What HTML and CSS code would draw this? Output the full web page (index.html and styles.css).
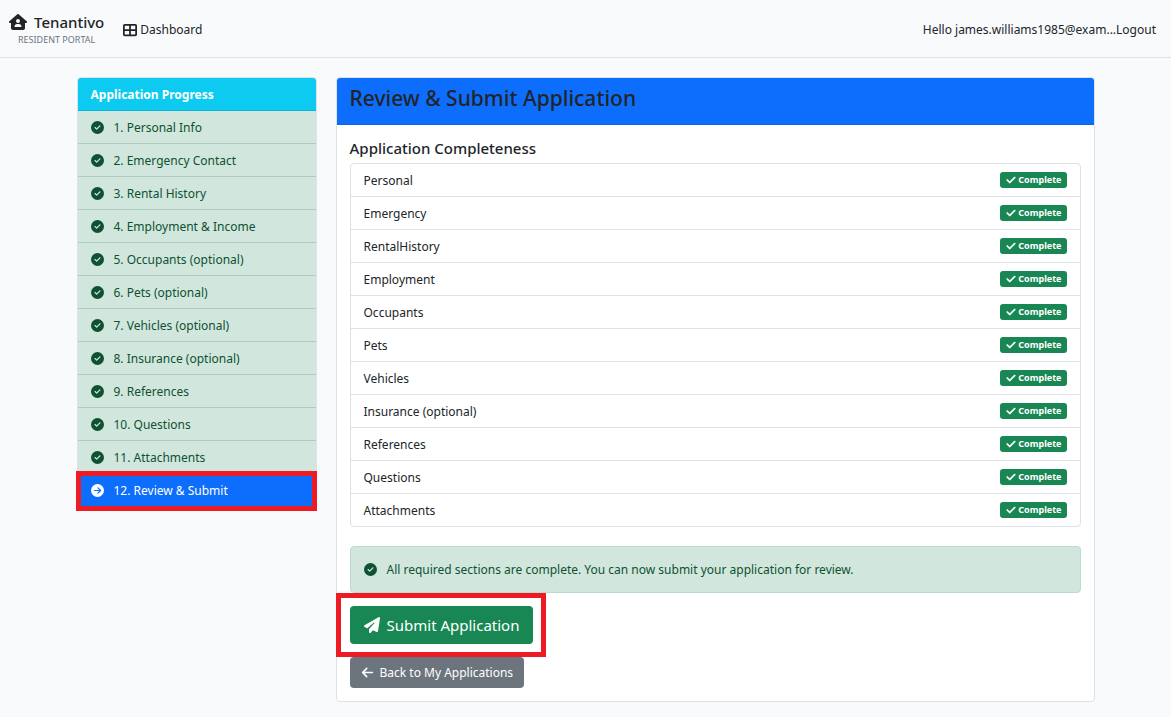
FILE: index.html
```html
<!DOCTYPE html>
<html lang="en">

<head>
    <meta charset="UTF-8">
    <meta name="viewport" content="width=device-width, initial-scale=1.0">
    <title>Review &amp; Submit Application - Tenantivo</title>
    <link rel="stylesheet" href="styles.css">
</head>

<body>
    <!-- Shared icons -->
    <svg class="icon-defs" aria-hidden="true">
        <symbol id="circle-check" viewBox="0 0 512 512">
            <path d="M256 512A256 256 0 1 0 256 0a256 256 0 1 0 0 512zM369 209L241 337c-9.4 9.4-24.6 9.4-33.9 0l-64-64c-9.4-9.4-9.4-24.6 0-33.9s24.6-9.4 33.9 0l47 47L335 175c9.4-9.4 24.6-9.4 33.9 0s9.4 24.6 0 33.9z"/>
        </symbol>
        <symbol id="check" viewBox="0 0 448 512">
            <path d="M438.6 105.4c12.5 12.5 12.5 32.8 0 45.3l-256 256c-12.5 12.5-32.8 12.5-45.3 0l-128-128c-12.5-12.5-12.5-32.8 0-45.3s32.8-12.5 45.3 0L160 338.7 393.4 105.4c12.5-12.5 32.8-12.5 45.3 0z"/>
        </symbol>
    </svg>

    <header class="navbar">
        <a href="#" class="brand">
            <span class="brand-name">
                <svg class="icon-brand" viewBox="0 0 576 512"><path d="M575.8 255.5c0 18-15 32.1-32 32.1l-32 0 .7 160.2c.2 35.5-28.5 64.3-64 64.3l-320.4 0c-35.3 0-64-28.7-64-64l0-160.4-32 0c-18 0-32-14-32-32.1c0-9 3-17 10-24L266.4 8c7-7 15-8 22-8s15 2 21 7L564.8 231.5c8 7 12 15 11 24zM352 224a64 64 0 1 0 -128 0 64 64 0 1 0 128 0zm-96 96c-44.2 0-80 35.8-80 80c0 8.8 7.2 16 16 16l192 0c8.8 0 16-7.2 16-16c0-44.2-35.8-80-80-80l-64 0z"/></svg>
                Tenantivo
            </span>
            <span class="brand-sub">RESIDENT PORTAL</span>
        </a>
        <a href="#" class="nav-link">
            <svg class="icon-grid" viewBox="0 0 512 512"><path d="M448 96V224H288V96H448zm0 192V416H288V288H448zM224 224H64V96H224V224zM64 288H224V416H64V288zM64 32C28.7 32 0 60.7 0 96V416c0 35.3 28.7 64 64 64H448c35.3 0 64-28.7 64-64V96c0-35.3-28.7-64-64-64H64z" fill-rule="evenodd"/></svg>
            Dashboard
        </a>
        <div class="nav-user">
            <a href="#" class="user-name">Hello james.williams1985@exam...</a>
            <a href="#">Logout</a>
        </div>
    </header>

    <div class="container">
        <nav class="card progress-card">
            <div class="progress-header">Application Progress</div>
            <a href="#" class="step"><svg class="icon"><use href="#circle-check"/></svg>1. Personal Info</a>
            <a href="#" class="step"><svg class="icon"><use href="#circle-check"/></svg>2. Emergency Contact</a>
            <a href="#" class="step"><svg class="icon"><use href="#circle-check"/></svg>3. Rental History</a>
            <a href="#" class="step"><svg class="icon"><use href="#circle-check"/></svg>4. Employment &amp; Income</a>
            <a href="#" class="step"><svg class="icon"><use href="#circle-check"/></svg>5. Occupants (optional)</a>
            <a href="#" class="step"><svg class="icon"><use href="#circle-check"/></svg>6. Pets (optional)</a>
            <a href="#" class="step"><svg class="icon"><use href="#circle-check"/></svg>7. Vehicles (optional)</a>
            <a href="#" class="step"><svg class="icon"><use href="#circle-check"/></svg>8. Insurance (optional)</a>
            <a href="#" class="step"><svg class="icon"><use href="#circle-check"/></svg>9. References</a>
            <a href="#" class="step"><svg class="icon"><use href="#circle-check"/></svg>10. Questions</a>
            <a href="#" class="step"><svg class="icon"><use href="#circle-check"/></svg>11. Attachments</a>
            <a href="#" class="step active">
                <svg class="icon" viewBox="0 0 512 512"><circle cx="256" cy="256" r="256"/><path class="arrow" d="M136 256H370M276 154L378 256L276 358"/></svg>12. Review &amp; Submit
            </a>
        </nav>

        <main class="card">
            <div class="card-header">
                <h1>Review &amp; Submit Application</h1>
            </div>
            <div class="card-body">
                <h2>Application Completeness</h2>
                <ul class="section-list">
                    <li>Personal <span class="badge"><svg class="icon-check"><use href="#check"/></svg>Complete</span></li>
                    <li>Emergency <span class="badge"><svg class="icon-check"><use href="#check"/></svg>Complete</span></li>
                    <li>RentalHistory <span class="badge"><svg class="icon-check"><use href="#check"/></svg>Complete</span></li>
                    <li>Employment <span class="badge"><svg class="icon-check"><use href="#check"/></svg>Complete</span></li>
                    <li>Occupants <span class="badge"><svg class="icon-check"><use href="#check"/></svg>Complete</span></li>
                    <li>Pets <span class="badge"><svg class="icon-check"><use href="#check"/></svg>Complete</span></li>
                    <li>Vehicles <span class="badge"><svg class="icon-check"><use href="#check"/></svg>Complete</span></li>
                    <li>Insurance (optional) <span class="badge"><svg class="icon-check"><use href="#check"/></svg>Complete</span></li>
                    <li>References <span class="badge"><svg class="icon-check"><use href="#check"/></svg>Complete</span></li>
                    <li>Questions <span class="badge"><svg class="icon-check"><use href="#check"/></svg>Complete</span></li>
                    <li>Attachments <span class="badge"><svg class="icon-check"><use href="#check"/></svg>Complete</span></li>
                </ul>

                <div class="alert">
                    <svg class="icon"><use href="#circle-check"/></svg>
                    All required sections are complete. You can now submit your application for review.
                </div>

                <form class="submit-form">
                    <button type="submit" class="btn btn-submit">
                        <svg class="icon-plane" viewBox="0 0 512 512"><path d="M498.1 5.6c10.1 7 15.4 19.1 13.5 31.2l-64 416c-1.5 9.7-7.4 18.2-16 23s-18.9 5.4-28 1.6L284 427.7l-68.5 74.1c-8.9 9.7-22.9 12.9-35.2 8.1S160 493.2 160 480l0-83.6c0-4 1.5-7.8 4.2-10.7L331.8 202.8c5.8-6.3 5.6-16-.4-22s-15.7-6.4-22-.7L106 360.8 17.7 316.6C7.1 311.3 .3 300.7 0 288.9s5.9-22.8 16.1-28.7l448-256c10.7-6.1 23.9-5.5 34 1.4z"/></svg>
                        Submit Application
                    </button>
                </form>
                <a href="#" class="btn btn-back">
                    <svg class="icon" viewBox="0 0 448 512"><path d="M9.4 233.4c-12.5 12.5-12.5 32.8 0 45.3l160 160c12.5 12.5 32.8 12.5 45.3 0s12.5-32.8 0-45.3L109.2 288 416 288c17.7 0 32-14.3 32-32s-14.3-32-32-32l-306.7 0L214.6 118.6c12.5-12.5 12.5-32.8 0-45.3s-32.8-12.5-45.3 0l-160 160z"/></svg>
                    Back to My Applications
                </a>
            </div>
        </main>
    </div>
</body>

</html>
```
FILE: styles.css
```css
* {
    box-sizing: border-box;
}

body {
    margin: 0;
    font-family: "Noto Sans", "Open Sans", sans-serif;
    font-size: 12px;
    line-height: 20px;
    color: #212529;
    background-color: #f9fafc;
}

a {
    color: inherit;
    text-decoration: none;
}

svg {
    fill: currentColor;
    flex-shrink: 0;
}

.icon-defs {
    display: none;
}

.icon {
    width: 13px;
    height: 13px;
}

/* Top bar */
.navbar {
    display: flex;
    align-items: center;
    height: 58px;
    padding: 2px 15px 0 9px;
    border-bottom: 1px solid #dee2e6;
}

.brand {
    display: flex;
    flex-direction: column;
    align-items: center;
    margin-right: 19px;
}

.brand-name {
    display: flex;
    align-items: center;
    gap: 7px;
    font-size: 15px;
    font-weight: 500;
}

.icon-brand {
    width: 18px;
    height: 16px;
}

.brand-sub {
    font-size: 9px;
    line-height: 16px;
    color: #6c757d;
}

.nav-link {
    display: flex;
    align-items: center;
    gap: 3px;
}

.icon-grid {
    width: 14px;
    height: 14px;
}

.nav-user {
    display: flex;
    margin-left: auto;
}

/* Layout */
.container {
    display: flex;
    align-items: flex-start;
    gap: 19px;
    max-width: 1018px;
    margin: 19px auto 15px;
}

.card {
    flex: 1;
    border: 1px solid #dee2e6;
    border-radius: 4px;
    background-color: #fff;
}

/* Progress sidebar */
.progress-card {
    flex: 0 0 240px;
}

.progress-header {
    padding: 7px 13px 5px;
    border-bottom: 1px solid #0cb4d5;
    border-radius: 3px 3px 0 0;
    background-color: #0dcaf0;
    color: #fff;
    font-weight: 700;
}

.step {
    display: flex;
    align-items: center;
    gap: 10px;
    padding: 7px 13px 5px;
    border-bottom: 1px solid #b0cabe;
    background-color: #d1e7dd;
    color: #0f5132;
}

.step .icon,
.alert .icon {
    margin-bottom: 2px;
}

.step.active {
    position: relative;
    border-bottom: 0;
    background-color: #0d6efd;
    color: #fff;
}

/* Red frames that point out where to click */
.step.active::after,
.submit-form::after {
    content: "";
    position: absolute;
    border: 5px solid #ed1c24;
}

.step.active::after {
    inset: -3px -1px -5px -2px;
}

.arrow {
    fill: none;
    stroke: #0d6efd;
    stroke-width: 48;
    stroke-linecap: round;
    stroke-linejoin: round;
}

/* Review card */
.card-header {
    padding: 7px 13px 12px;
    border-bottom: 1px solid #0c63e4;
    border-radius: 3px 3px 0 0;
    background-color: #0d6efd;
}

h1 {
    margin: 0;
    font-size: 21px;
    font-weight: 500;
    line-height: 27px;
}

.card-body {
    padding: 13px;
}

h2 {
    margin: 0 0 5px;
    font-size: 15px;
    font-weight: 500;
    line-height: 20px;
}

.section-list {
    margin: 0 0 19px;
    padding: 0;
    border: 1px solid #dee2e6;
    border-radius: 4px;
    list-style: none;
}

.section-list li {
    display: flex;
    justify-content: space-between;
    align-items: center;
    padding: 7px 13px 5px;
}

.section-list li + li {
    border-top: 1px solid #dee2e6;
}

.badge {
    display: flex;
    align-items: center;
    gap: 2px;
    padding: 2px 5px 2px 6px;
    margin-bottom: 2px;
    border-radius: 3px;
    background-color: #198754;
    color: #fff;
    font-size: 9px;
    font-weight: 700;
    line-height: 12px;
}

.icon-check {
    width: 10px;
    height: 10px;
    stroke: currentColor;
    stroke-width: 24;
}

.alert {
    display: flex;
    align-items: center;
    gap: 10px;
    padding: 13px 13px 12px;
    margin-bottom: 13px;
    border: 1px solid #badbcc;
    border-radius: 4px;
    background-color: #d1e7dd;
    color: #0f5132;
}

.submit-form {
    position: relative;
    width: fit-content;
    margin-bottom: 13px;
}

.submit-form::after {
    inset: -13px -13px -13px -14px;
    pointer-events: none;
}

.btn {
    display: flex;
    align-items: center;
    width: fit-content;
    border: 0;
    border-radius: 4px;
    color: #fff;
    font-family: inherit;
    cursor: pointer;
}

.btn-submit {
    gap: 7px;
    padding: 7px 14px;
    background-color: #198754;
    font-size: 15px;
    line-height: 24px;
}

.icon-plane {
    width: 16px;
    height: 16px;
}

.btn-back {
    gap: 6px;
    padding: 6px 11px;
    background-color: #6c757d;
    line-height: 19px;
}
```
